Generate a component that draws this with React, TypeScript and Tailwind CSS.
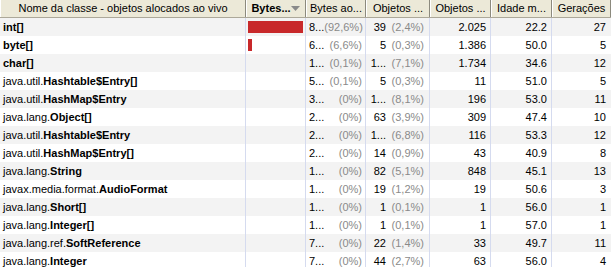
import React from 'react';

type Row = {
    pkg: string;
    cls: string;
    bar: number;
    bytes: string;
    bytesPct: string;
    objs: string;
    objsPct: string;
    total: string;
    age: string;
    gens: string;
};

const rows: Row[] = [
    { pkg: '', cls: 'int[]', bar: 56, bytes: '8...', bytesPct: '(92,6%)', objs: '39', objsPct: '(2,4%)', total: '2.025', age: '22.2', gens: '27' },
    { pkg: '', cls: 'byte[]', bar: 4, bytes: '6...', bytesPct: '(6,6%)', objs: '5', objsPct: '(0,3%)', total: '1.386', age: '50.0', gens: '5' },
    { pkg: '', cls: 'char[]', bar: 0, bytes: '1...', bytesPct: '(0,1%)', objs: '1...', objsPct: '(7,1%)', total: '1.734', age: '34.6', gens: '12' },
    { pkg: 'java.util.', cls: 'Hashtable$Entry[]', bar: 0, bytes: '5...', bytesPct: '(0,1%)', objs: '5', objsPct: '(0,3%)', total: '11', age: '51.0', gens: '5' },
    { pkg: 'java.util.', cls: 'HashMap$Entry', bar: 0, bytes: '3...', bytesPct: '(0%)', objs: '1...', objsPct: '(8,1%)', total: '196', age: '53.0', gens: '11' },
    { pkg: 'java.lang.', cls: 'Object[]', bar: 0, bytes: '2...', bytesPct: '(0%)', objs: '63', objsPct: '(3,9%)', total: '309', age: '47.4', gens: '10' },
    { pkg: 'java.util.', cls: 'Hashtable$Entry', bar: 0, bytes: '2...', bytesPct: '(0%)', objs: '1...', objsPct: '(6,8%)', total: '116', age: '53.3', gens: '12' },
    { pkg: 'java.util.', cls: 'HashMap$Entry[]', bar: 0, bytes: '2...', bytesPct: '(0%)', objs: '14', objsPct: '(0,9%)', total: '43', age: '40.9', gens: '8' },
    { pkg: 'java.lang.', cls: 'String', bar: 0, bytes: '1...', bytesPct: '(0%)', objs: '82', objsPct: '(5,1%)', total: '848', age: '45.1', gens: '13' },
    { pkg: 'javax.media.format.', cls: 'AudioFormat', bar: 0, bytes: '1...', bytesPct: '(0%)', objs: '19', objsPct: '(1,2%)', total: '19', age: '50.6', gens: '3' },
    { pkg: 'java.lang.', cls: 'Short[]', bar: 0, bytes: '1...', bytesPct: '(0%)', objs: '1', objsPct: '(0,1%)', total: '1', age: '56.0', gens: '1' },
    { pkg: 'java.lang.', cls: 'Integer[]', bar: 0, bytes: '1...', bytesPct: '(0%)', objs: '1', objsPct: '(0,1%)', total: '1', age: '57.0', gens: '1' },
    { pkg: 'java.lang.ref.', cls: 'SoftReference', bar: 0, bytes: '7...', bytesPct: '(0%)', objs: '22', objsPct: '(1,4%)', total: '33', age: '49.7', gens: '11' },
    { pkg: 'java.lang.', cls: 'Integer', bar: 0, bytes: '7...', bytesPct: '(0%)', objs: '44', objsPct: '(2,7%)', total: '63', age: '56.0', gens: '4' },
];

const cols = 'grid grid-cols-[246px_60px_60px_64px_61px_61px_59px]';

// header cell, windows xp style
const headCell = 'h-[17px] flex items-center justify-center bg-[#ece9d8] border-l border-l-white border-r border-r-[#8c8a7e] whitespace-nowrap overflow-hidden';

export default function App() {
    return (
        <div className="w-[611px] h-[267px] overflow-hidden bg-white text-[11px] text-black" style={{ fontFamily: '"Liberation Sans", Arial, sans-serif' }}>
            {/* header */}
            <div className={`${cols} border-b border-[#aca899]`}>
                <div className={headCell}>Nome da classe - objetos alocados ao vivo</div>
                <div className={`${headCell} justify-between px-[2px] border-l-[#8c8a7e]`}>
                    <span className="font-bold">Bytes...</span>
                    <svg width="9" height="5" viewBox="0 0 9 5" className="mr-[1px]">
                        <polygon points="0,0 9,0 4.5,5" fill="#8a8a8a" />
                    </svg>
                </div>
                <div className={headCell}>Bytes ao...</div>
                <div className={headCell}>Objetos ...</div>
                <div className={headCell}>Objetos ...</div>
                <div className={headCell}>Idade m...</div>
                <div className={headCell}>Gerações</div>
            </div>

            {/* rows */}
            {rows.map((r, i) => (
                <div key={i} className={`${cols} h-[18px] ${i % 2 === 0 ? 'bg-[#f3f3f3]' : 'bg-white'}`}>
                    <div className="flex items-center pl-[3px] whitespace-nowrap border-r border-[#d5dbef]">
                        <span>{r.pkg}</span>
                        <span className="font-bold">{r.cls}</span>
                    </div>
                    <div className="flex items-center px-[2px] border-r border-[#d5dbef]">
                        {r.bar > 0 && <div className="h-[12px] bg-[#c8282a]" style={{ width: r.bar }} />}
                    </div>
                    <div className="flex items-center justify-between pl-[3px] pr-[3px] whitespace-nowrap border-r border-[#d5dbef]">
                        <span>{r.bytes}</span>
                        <span className="text-[#8a8a8a]">{r.bytesPct}</span>
                    </div>
                    <div className="flex items-center pl-[3px] pr-[5px] whitespace-nowrap border-r border-[#d5dbef]">
                        <span className="w-[17px] text-right">{r.objs}</span>
                        <span className="flex-1 text-right text-[#8a8a8a]">{r.objsPct}</span>
                    </div>
                    <div className="flex items-center justify-end pr-[4px] border-r border-[#d5dbef]">{r.total}</div>
                    <div className="flex items-center justify-end pr-[4px] border-r border-[#d5dbef]">{r.age}</div>
                    <div className="flex items-center justify-end pr-[5px]">{r.gens}</div>
                </div>
            ))}
        </div>
    );
}
